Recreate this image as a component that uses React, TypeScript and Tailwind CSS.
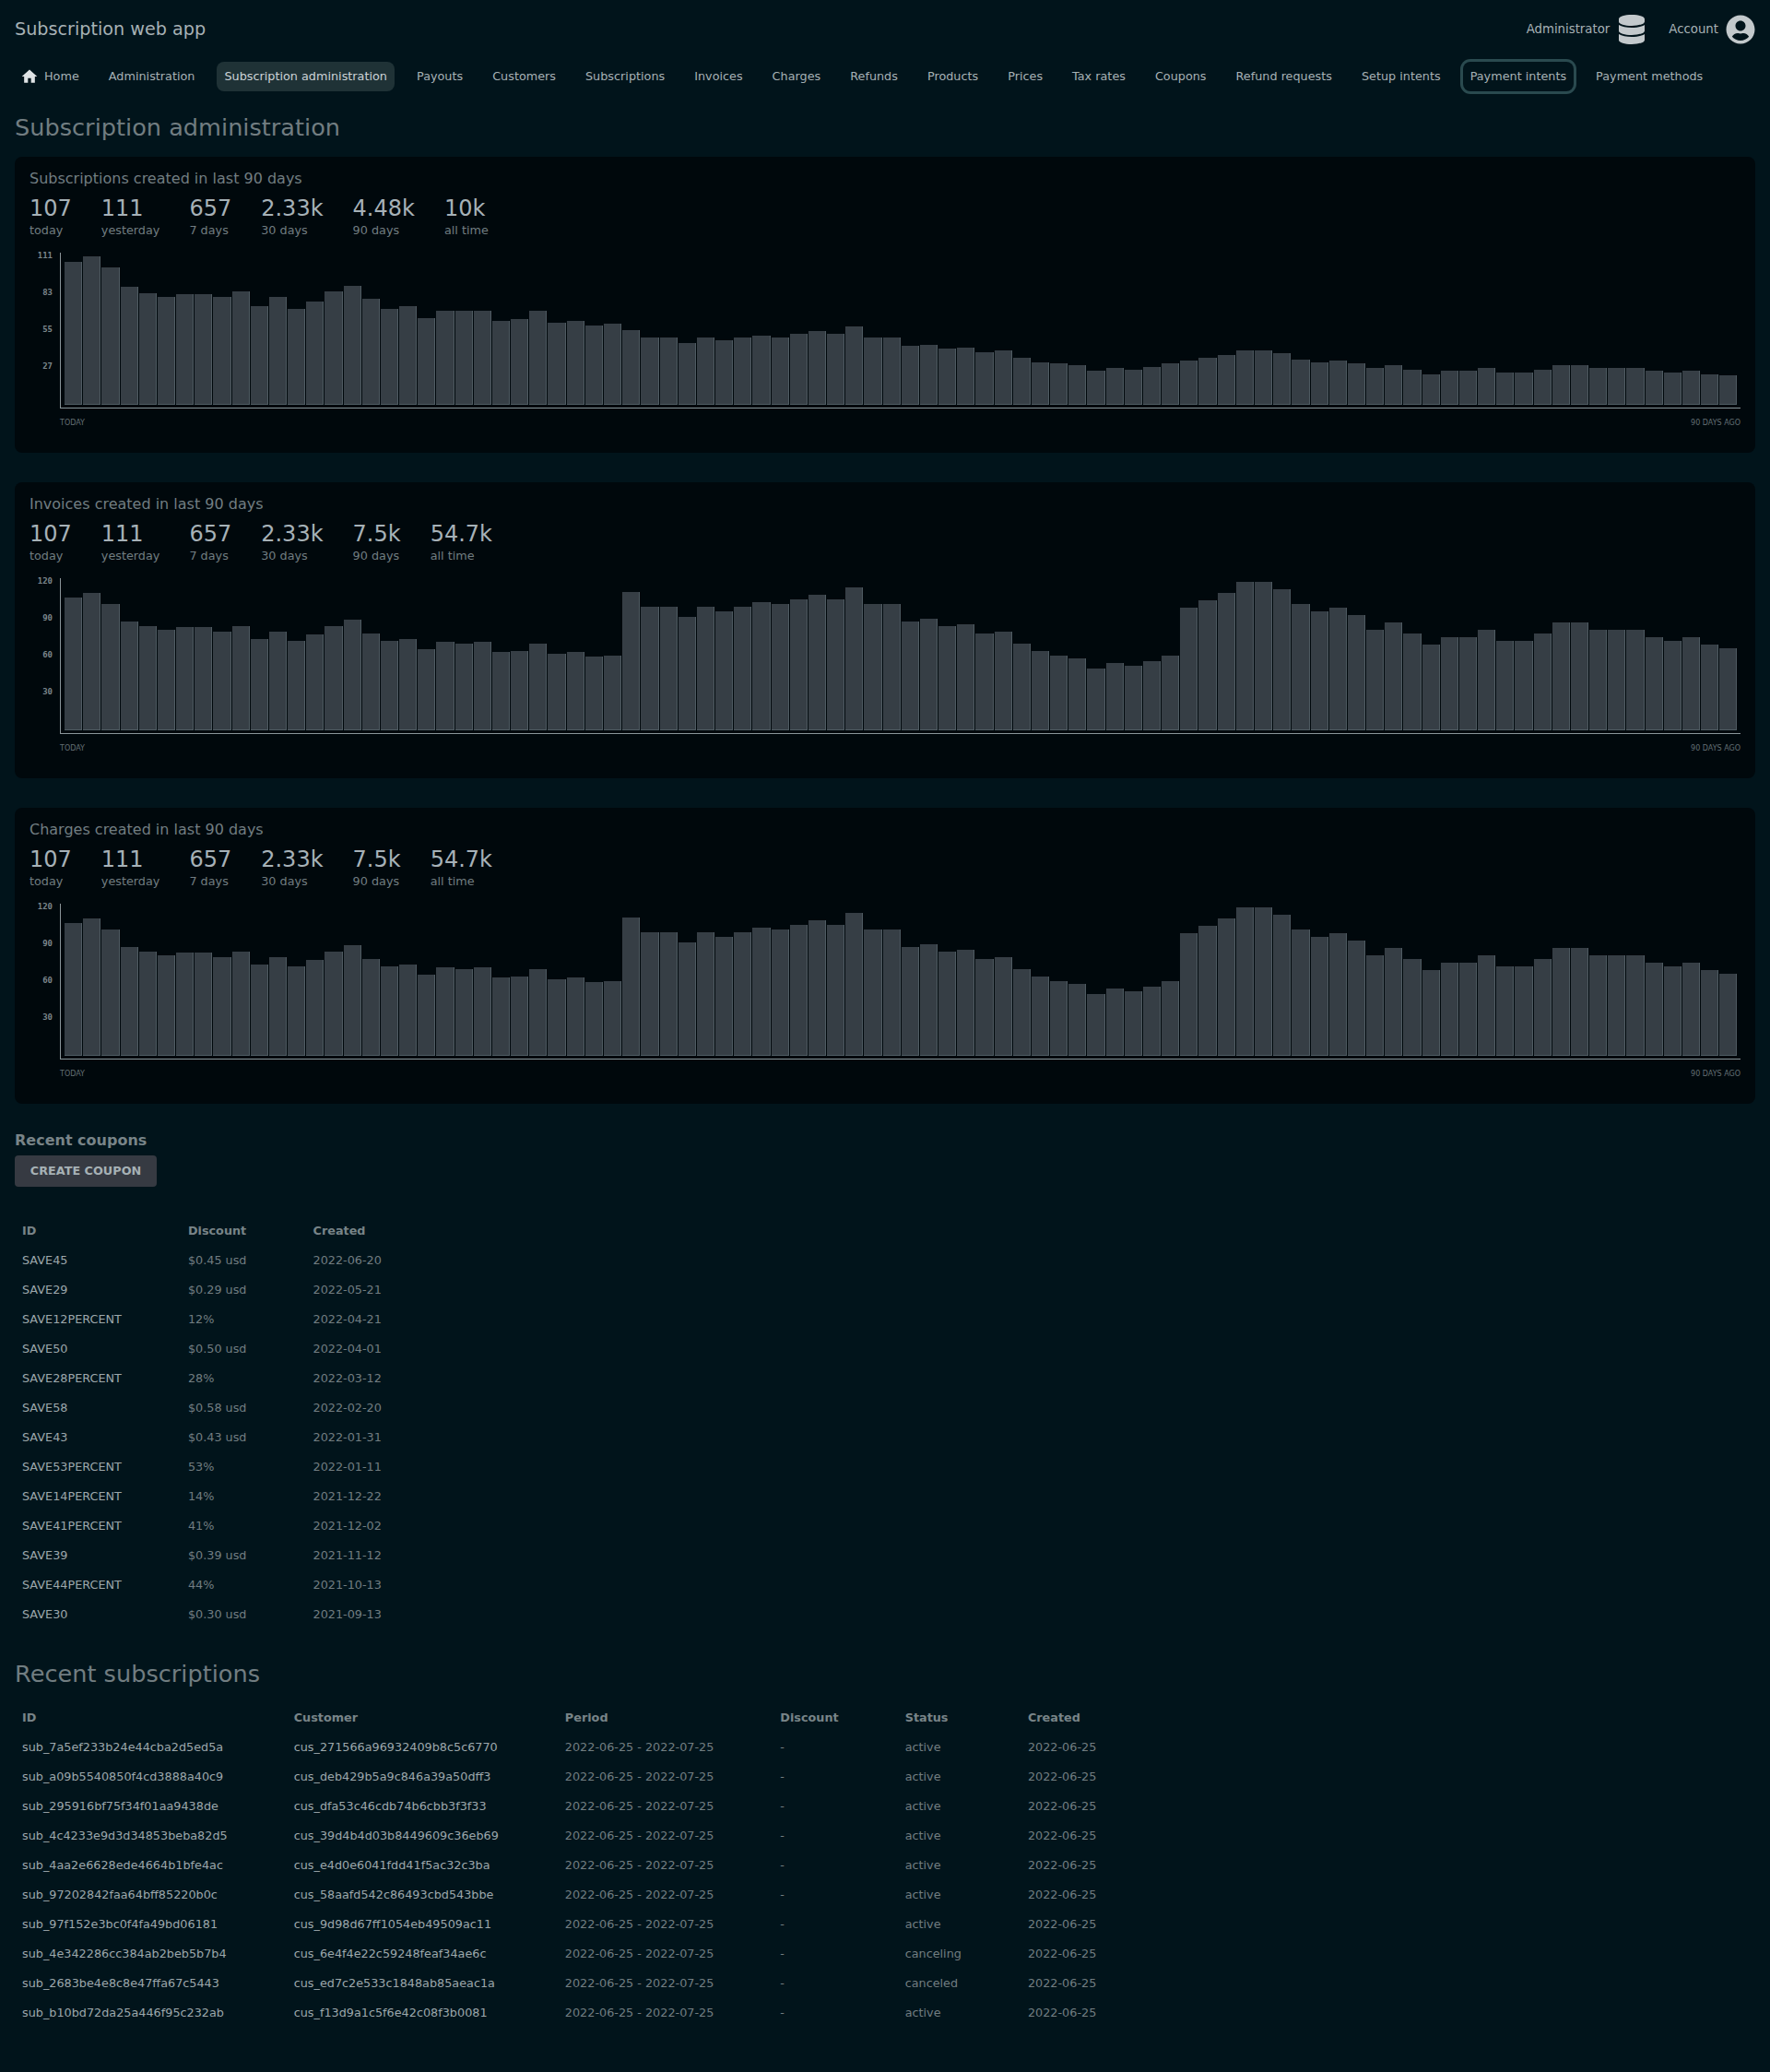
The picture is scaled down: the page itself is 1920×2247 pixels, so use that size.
import React from "react";
import { FaDatabase, FaUserCircle } from "react-icons/fa";
import { MdHome } from "react-icons/md";

const chart1Tops = [
  [72,54,90,153,174,186,177,177,186,168,216,186,225,201,168,150,192].map((y) => (537 - y) / 3),
  [195,186,225,201,201,201,234,228,201,240,234,249,243,264,288,288,306,288,297,288,282,288,276,267,276,252,288,288,315,312,324,321,336,330,354,369,372,378,396,387,393,384,372,363,354,345,330,330,339,360,369,363,372,387,378,393,408,396,396,387,402,402,393,378,378,387,387,387,396,402,396,408,411].map((y) => (506 - y) / 3),
].flat();

const chart2Tops = [144,129,165,222,237,249,240,240,255,237,279,255,285,264,237,216,261,285,279,312,288,294,288,321,318,294,327,321,336,333,126,174,174,207,174,189,174,159,165,150,135,150,111,165,165,222,213,237,231,261,255,294,318,333,342,375,357,366,351,333,177,153,129,93,93,117,165,189,177,201,249,225,261,297,273,273,249,285,285,261,225,225,249,249,249,273,285,273,297,309].map((y) => (575 - y) / 3);

const nav = ["Administration","Subscription administration","Payouts","Customers","Subscriptions","Invoices","Charges","Refunds","Products","Prices","Tax rates","Coupons","Refund requests","Setup intents","Payment intents","Payment methods"];

const coupons = [
  ["SAVE45","$0.45 usd","2022-06-20"],["SAVE29","$0.29 usd","2022-05-21"],["SAVE12PERCENT","12%","2022-04-21"],["SAVE50","$0.50 usd","2022-04-01"],["SAVE28PERCENT","28%","2022-03-12"],["SAVE58","$0.58 usd","2022-02-20"],["SAVE43","$0.43 usd","2022-01-31"],["SAVE53PERCENT","53%","2022-01-11"],["SAVE14PERCENT","14%","2021-12-22"],["SAVE41PERCENT","41%","2021-12-02"],["SAVE39","$0.39 usd","2021-11-12"],["SAVE44PERCENT","44%","2021-10-13"],["SAVE30","$0.30 usd","2021-09-13"],
];

const subs = [
  ["sub_7a5ef233b24e44cba2d5ed5a","cus_271566a96932409b8c5c6770","active"],
  ["sub_a09b5540850f4cd3888a40c9","cus_deb429b5a9c846a39a50dff3","active"],
  ["sub_295916bf75f34f01aa9438de","cus_dfa53c46cdb74b6cbb3f3f33","active"],
  ["sub_4c4233e9d3d34853beba82d5","cus_39d4b4d03b8449609c36eb69","active"],
  ["sub_4aa2e6628ede4664b1bfe4ac","cus_e4d0e6041fdd41f5ac32c3ba","active"],
  ["sub_97202842faa64bff85220b0c","cus_58aafd542c86493cbd543bbe","active"],
  ["sub_97f152e3bc0f4fa49bd06181","cus_9d98d67ff1054eb49509ac11","active"],
  ["sub_4e342286cc384ab2beb5b7b4","cus_6e4f4e22c59248feaf34ae6c","canceling"],
  ["sub_2683be4e8c8e47ffa67c5443","cus_ed7c2e533c1848ab85aeac1a","canceled"],
  ["sub_b10bd72da25a446f95c232ab","cus_f13d9a1c5f6e42c08f3b0081","active"],
];

function Th({ children }: { children: React.ReactNode }) {
  return <th className="pl-2 pr-[64px] text-left font-bold text-[12.8px] text-[#788488]">{children}</th>;
}
function Td({ children, bright }: { children: React.ReactNode; bright?: boolean }) {
  return <td className={"pl-2 pr-[64px] text-[12.8px] whitespace-nowrap " + (bright ? "text-[#9ca7ab]" : "text-[#717d81]")}>{children}</td>;
}

function Card({ title, stats, yLabels, bars }: { title: string; stats: [string, string][]; yLabels: string[]; bars: number[] }) {
  return (
    <section className="h-[321px] rounded-lg bg-[#00080c] px-4 pt-3">
      <h3 className="text-base leading-6 text-[#717d81]">{title}</h3>
      <div className="mt-1 flex gap-8">
        {stats.map(([n, l]) => (
          <div key={l}>
            <div className="text-2xl leading-8 text-[#a6b1b7]">{n}</div>
            <div className="text-[12.8px] leading-4 text-[#717d81]">{l}</div>
          </div>
        ))}
      </div>
      <div className="mt-4 flex">
        <div className="-mt-[3px] mr-2 flex w-[25px] flex-col items-end gap-[28px] font-['DejaVu_Sans_Mono',monospace] text-[9px] font-bold leading-3 text-[#7b868b]">
          {yLabels.map((l) => <div key={l} className="h-3">{l}</div>)}
        </div>
        <div className="flex-1">
          <div className="flex h-[169px] items-end gap-px border-b border-l border-[#8a9599] pb-[3px] pl-1 pr-[3px]">
            {bars.map((h, i) => (
              <div key={i} className="flex-1 border-b border-r border-[#4f5b62] bg-[#363e45]" style={{ height: h }} />
            ))}
          </div>
          <div className="mt-[9px] flex justify-between text-[8px] leading-[14px] text-[#636f74]">
            <span>TODAY</span>
            <span>90 DAYS AGO</span>
          </div>
        </div>
      </div>
    </section>
  );
}

export default function App() {
  return (
    <div className="min-h-screen bg-[#01141b] px-4 pb-12 font-['DejaVu_Sans',sans-serif]">
      <header className="flex h-16 items-center justify-between">
        <div className="text-[19.2px] text-[#a6b1b5]">Subscription web app</div>
        <div className="flex items-center text-[13.3px] text-[#a6b1b5]">
          <span className="mr-[10px]">Administrator</span>
          <FaDatabase className="h-8 w-7 text-[#c3c9cc]" />
          <span className="ml-[26px] mr-2">Account</span>
          <FaUserCircle className="h-8 w-8 text-[#c3c9cc]" />
        </div>
      </header>
      <nav className="flex h-[38px] items-center gap-4 text-[12.8px] text-[#a6b1b5]">
        <a className="flex h-8 items-center gap-2 px-2"><MdHome className="h-5 w-5 -mx-0.5 text-[#dfe3e5]" />Home</a>
        {nav.map((n) => (
          <a key={n} className={"flex h-8 items-center rounded-lg px-2 " + (n === "Subscription administration" ? "bg-[#1f3236] text-[#ccd3d6]" : n === "Payment intents" ? "ring-[3px] ring-[#2a4a4f]" : "")}>{n}</a>
        ))}
      </nav>
      <h1 className="mt-5 mb-4 text-[25.6px] leading-8 text-[#717d81]">Subscription administration</h1>
      <div className="flex flex-col gap-8">
        <Card title="Subscriptions created in last 90 days" stats={[["107","today"],["111","yesterday"],["657","7 days"],["2.33k","30 days"],["4.48k","90 days"],["10k","all time"]]} yLabels={["111","83","55","27"]} bars={chart1Tops} />
        <Card title="Invoices created in last 90 days" stats={[["107","today"],["111","yesterday"],["657","7 days"],["2.33k","30 days"],["7.5k","90 days"],["54.7k","all time"]]} yLabels={["120","90","60","30"]} bars={chart2Tops} />
        <Card title="Charges created in last 90 days" stats={[["107","today"],["111","yesterday"],["657","7 days"],["2.33k","30 days"],["7.5k","90 days"],["54.7k","all time"]]} yLabels={["120","90","60","30"]} bars={chart2Tops} />
      </div>
      <h2 className="mt-7 text-base font-bold leading-6 text-[#788488]">Recent coupons</h2>
      <button className="mt-1 h-[34px] w-[154px] rounded bg-[#363a42] text-[12.8px] font-bold text-[#a6b1b5]">CREATE COUPON</button>
      <table className="mt-8 border-collapse">
        <thead><tr className="h-8"><Th>ID</Th><Th>Discount</Th><Th>Created</Th></tr></thead>
        <tbody>
          {coupons.map((r) => (
            <tr key={r[0]} className="h-8"><Td bright>{r[0]}</Td><Td>{r[1]}</Td><Td>{r[2]}</Td></tr>
          ))}
        </tbody>
      </table>
      <h2 className="mt-8 text-[25.6px] leading-8 text-[#717d81]">Recent subscriptions</h2>
      <table className="mt-4 border-collapse">
        <thead><tr className="h-8"><Th>ID</Th><Th>Customer</Th><Th>Period</Th><Th>Discount</Th><Th>Status</Th><Th>Created</Th></tr></thead>
        <tbody>
          {subs.map((r) => (
            <tr key={r[0]} className="h-8"><Td bright>{r[0]}</Td><Td bright>{r[1]}</Td><Td>2022-06-25 - 2022-07-25</Td><Td>-</Td><Td>{r[2]}</Td><Td>2022-06-25</Td></tr>
          ))}
        </tbody>
      </table>
    </div>
  );
}
